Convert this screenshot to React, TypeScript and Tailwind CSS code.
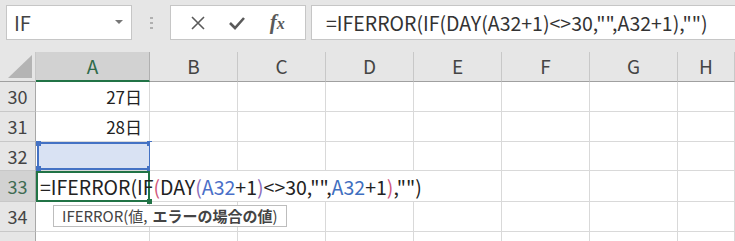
import React from "react";

const cols = ["A", "B", "C", "D", "E", "F", "G", "H"];

function Formula() {
  return (
    <>
      <span>=IFERROR(IF</span>
      <span className="text-[#d0577c]">(</span>
      <span>DAY</span>
      <span className="text-[#8a6bb8]">(</span>
      <span className="text-[#4a6fc8]">A32</span>
      <span>+1</span>
      <span className="text-[#8a6bb8]">)</span>
      <span>{'<>30,"",'}</span>
      <span className="text-[#3f6fc0]">A32</span>
      <span>+1</span>
      <span className="text-[#d0577c]">)</span>
      <span>{',"")'}</span>
    </>
  );
}

function RowHeader({ n, selected }: { n?: number; selected?: boolean }) {
  return (
    <div
      className={
        "flex items-center justify-center border-b border-r border-b-[#c8c8c8] border-r-[#a8a8a8] text-[18px] " +
        (selected ? "bg-[#d2d2d2] text-[#3f6b52]" : "bg-[#e6e6e6] text-[#444]")
      }
    >
      {n}
    </div>
  );
}

function Cell({ children, className = "" }: { children?: React.ReactNode; className?: string }) {
  return <div className={"relative border-b border-r border-[#d9d9d9] bg-white " + className}>{children}</div>;
}

function EmptyCells({ from = 1, noRight = [] as number[] }) {
  return (
    <>
      {cols.slice(from).map((c, i) => (
        <Cell key={c} className={noRight.includes(i + from) ? "border-r-0 bg-transparent" : ""} />
      ))}
    </>
  );
}

export default function App() {
  return (
    <div className="w-[735px] h-[241px] overflow-hidden bg-[#e6e6e6] font-['Noto_Sans_CJK_JP','Liberation_Sans',sans-serif] text-[#222]">
      {/* formula bar */}
      <div className="flex h-[52px] items-start pt-[5px] pl-[6px]">
        <div className="flex h-[35px] w-[126px] items-center justify-between border border-[#c6c6c6] bg-white pl-[7px] pr-[8px] text-[20px] text-[#444]">
          <span>IF</span>
          <svg width="8" height="5" viewBox="0 0 8 5">
            <path d="M0 0 L8 0 L4 4 Z" fill="#777" />
          </svg>
        </div>
        <div className="flex h-[35px] w-[38px] flex-col items-center justify-center gap-[3px]">
          <span className="h-[2px] w-[3px] bg-[#b0b0b0]" />
          <span className="h-[2px] w-[3px] bg-[#b0b0b0]" />
          <span className="h-[2px] w-[3px] bg-[#b0b0b0]" />
        </div>
        <div className="flex h-[35px] w-[136px] items-center justify-around border border-[#c6c6c6] bg-white px-[8px]">
          <svg width="14" height="14" viewBox="0 0 14 14">
            <path d="M1 1 L13 13 M13 1 L1 13" stroke="#5a5a5a" strokeWidth="1.6" />
          </svg>
          <svg width="16" height="14" viewBox="0 0 16 14">
            <path d="M1 7 L6 12 L15 2" stroke="#5a5a5a" strokeWidth="2.6" fill="none" />
          </svg>
          <span className="font-['Liberation_Serif',serif] text-[21px] font-bold italic leading-none text-[#5a5a5a]">
            f<span className="text-[16px]">x</span>
          </span>
        </div>
        <div className="ml-[5px] flex h-[35px] flex-1 items-center border border-r-0 border-[#c6c6c6] bg-white pl-[14px] text-[19.5px] text-[#333] whitespace-nowrap">
          {'=IFERROR(IF(DAY(A32+1)<>30,"",A32+1),"")'}
        </div>
      </div>

      {/* sheet grid */}
      <div className="grid grid-cols-[36px_114px_88px_88px_88px_88px_88px_88px_1fr] grid-rows-[30px_30px_30px_29px_31px_30px_30px] bg-white">
        {/* header row */}
        <div className="relative border-b border-r border-b-[#a0a0a0] border-r-[#c8c8c8] bg-[#e6e6e6]">
          <svg className="absolute right-[3px] bottom-[3px]" width="24" height="23" viewBox="0 0 24 23">
            <path d="M24 0 L24 23 L0 23 Z" fill="#b4b4b4" />
          </svg>
        </div>
        {cols.map((c) => (
          <div
            key={c}
            className={
              "flex items-center justify-center text-[19px] " +
              (c === "A"
                ? "bg-[#d2d2d2] text-[#2f6a4a] border-b-2 border-b-[#217346] border-r border-r-[#b0b0b0]"
                : "bg-[#e6e6e6] text-[#444] border-b border-b-[#a0a0a0] border-r border-r-[#c8c8c8]")
            }
          >
            {c}
          </div>
        ))}

        {/* row 30 */}
        <RowHeader n={30} />
        <Cell className="flex items-center justify-end pr-[7px] text-[17px]">27日</Cell>
        <EmptyCells />

        {/* row 31 */}
        <RowHeader n={31} />
        <Cell className="flex items-center justify-end pr-[7px] text-[17px]">28日</Cell>
        <EmptyCells />

        {/* row 32 */}
        <RowHeader n={32} />
        <Cell className="!bg-white pl-[1px]">
          <div className="relative h-full w-[114px] border-2 border-[#4472c4] bg-[#d9e2f3]">
            <span className="absolute -left-[3px] -top-[3px] h-[5px] w-[5px] bg-[#4472c4]" />
            <span className="absolute -right-[3px] -top-[3px] h-[5px] w-[5px] bg-[#4472c4]" />
            <span className="absolute -left-[3px] -bottom-[3px] h-[5px] w-[5px] bg-[#4472c4]" />
            <span className="absolute -right-[3px] -bottom-[3px] h-[5px] w-[5px] bg-[#4472c4]" />
          </div>
        </Cell>
        <EmptyCells />

        {/* row 33 */}
        <RowHeader n={33} selected />
        <div className="relative z-10 flex items-center border-2 border-[#217346] bg-transparent pl-[2px] text-[19.5px] text-[#222] whitespace-nowrap">
          <div className="overflow-visible">
            <Formula />
          </div>
          <span className="absolute -right-[4px] -bottom-[4px] h-[5px] w-[5px] bg-[#217346]" />
        </div>
        <EmptyCells noRight={[1, 2, 3]} />

        {/* row 34 */}
        <RowHeader n={34} />
        <Cell>
          <div className="absolute left-[17px] top-[3px] z-20 flex h-[22px] items-center border border-[#bdbdbd] bg-white px-[8px] text-[15px] text-[#444] whitespace-nowrap">
            <span>IFERROR(値,</span>
            <span className="ml-[5px] font-bold">エラーの場合の値</span>
            <span>)</span>
          </div>
        </Cell>
        <EmptyCells />

        {/* row 35 */}
        <RowHeader />
        <Cell />
        <EmptyCells />
      </div>
    </div>
  );
}
